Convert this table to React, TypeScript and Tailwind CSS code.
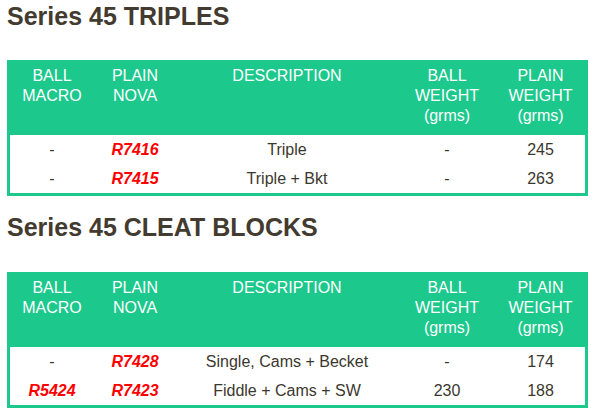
const COLS = "grid grid-cols-[84px_82px_222px_98px_89px]";

type Row = { macro: string; nova: string; desc: string; ballW: string; plainW: string };

const triples: Row[] = [
  { macro: "-", nova: "R7416", desc: "Triple", ballW: "-", plainW: "245" },
  { macro: "-", nova: "R7415", desc: "Triple + Bkt", ballW: "-", plainW: "263" },
];

const cleats: Row[] = [
  { macro: "-", nova: "R7428", desc: "Single, Cams + Becket", ballW: "-", plainW: "174" },
  { macro: "R5424", nova: "R7423", desc: "Fiddle + Cams + SW", ballW: "230", plainW: "188" },
];

function Code({ value }: { value: string }) {
  if (value === "-") return <span>-</span>;
  return <span className="font-bold italic text-[#ff0000]">{value}</span>;
}

function SeriesTable({ rows }: { rows: Row[] }) {
  return (
    <div className="w-[581px] border-[3px] border-[#1cc88c]">
      <div className={`${COLS} h-[72px] bg-[#1cc88c] pt-[3px] text-center text-[16px] leading-[20px] text-white`}>
        <div>
          BALL
          <br />
          MACRO
        </div>
        <div>
          PLAIN
          <br />
          NOVA
        </div>
        <div>DESCRIPTION</div>
        <div>
          BALL
          <br />
          WEIGHT
          <br />
          (grms)
        </div>
        <div>
          PLAIN
          <br />
          WEIGHT
          <br />
          (grms)
        </div>
      </div>
      <div className="bg-white text-[16px] text-[#3b372e]">
        {rows.map((r) => (
          <div key={r.nova} className={`${COLS} h-[29px] items-center text-center`}>
            <div>
              <Code value={r.macro} />
            </div>
            <div>
              <Code value={r.nova} />
            </div>
            <div>{r.desc}</div>
            <div>{r.ballW}</div>
            <div>{r.plainW}</div>
          </div>
        ))}
      </div>
    </div>
  );
}

export default function App() {
  return (
    <div className="min-h-[417px] w-[596px] bg-white px-[7px] pt-[2px] font-['Liberation_Sans',Arial,sans-serif]">
      <h1 className="text-[25px] font-bold leading-[28px] text-[#433b30]">Series 45 TRIPLES</h1>
      <div className="mt-[30px]">
        <SeriesTable rows={triples} />
      </div>
      <h1 className="mt-[17px] text-[25px] font-bold leading-[28px] text-[#433b30]">
        Series 45 CLEAT BLOCKS
      </h1>
      <div className="mt-[31px]">
        <SeriesTable rows={cleats} />
      </div>
    </div>
  );
}
